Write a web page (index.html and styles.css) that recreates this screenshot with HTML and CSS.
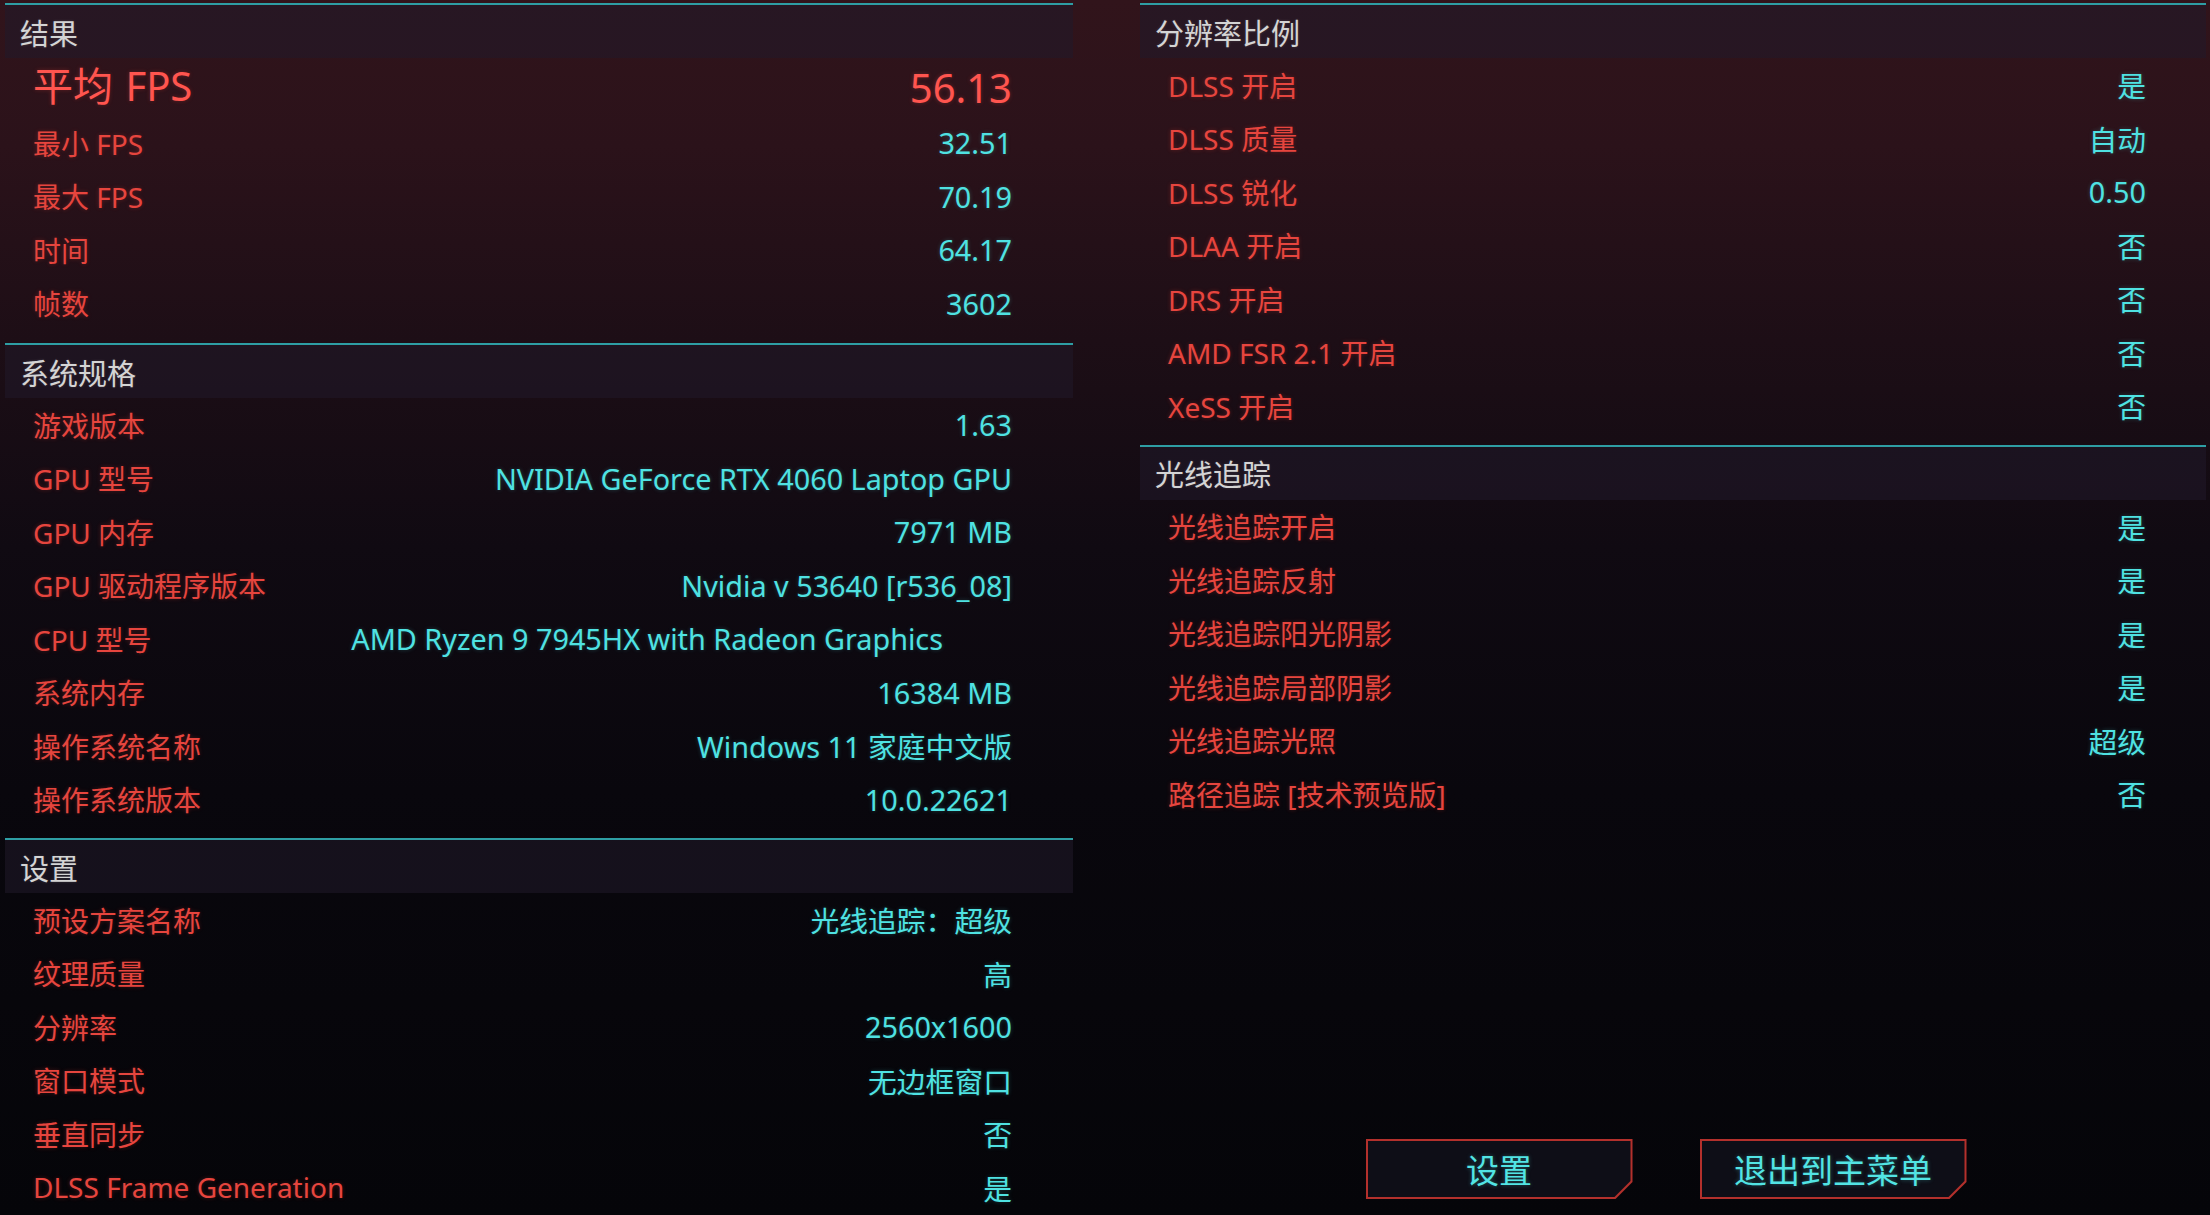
FILE: index.html
```html
<!DOCTYPE html>
<html lang="zh-CN">
<head>
  <meta charset="UTF-8">
  <title>基准测试结果</title>
  <link rel="stylesheet" href="styles.css">
</head>
<body>

  <div class="screen">

    <div class="column column-left">
      <section class="group group-first">
        <h2 class="group-title">结果</h2>
        <div class="row row-main"><span class="label">平均 FPS</span><span class="value">56.13</span></div>
        <div class="row"><span class="label">最小 FPS</span><span class="value">32.51</span></div>
        <div class="row"><span class="label">最大 FPS</span><span class="value">70.19</span></div>
        <div class="row"><span class="label">时间</span><span class="value">64.17</span></div>
        <div class="row"><span class="label">帧数</span><span class="value">3602</span></div>
      </section>

      <section class="group">
        <h2 class="group-title">系统规格</h2>
        <div class="row"><span class="label">游戏版本</span><span class="value">1.63</span></div>
        <div class="row"><span class="label">GPU 型号</span><span class="value">NVIDIA GeForce RTX 4060 Laptop GPU</span></div>
        <div class="row"><span class="label">GPU 内存</span><span class="value">7971 MB</span></div>
        <div class="row"><span class="label">GPU 驱动程序版本</span><span class="value">Nvidia v 53640 [r536_08]</span></div>
        <div class="row"><span class="label">CPU 型号</span><span class="value value-cpu">AMD Ryzen 9 7945HX with Radeon Graphics</span></div>
        <div class="row"><span class="label">系统内存</span><span class="value">16384 MB</span></div>
        <div class="row"><span class="label">操作系统名称</span><span class="value">Windows 11 家庭中文版</span></div>
        <div class="row"><span class="label">操作系统版本</span><span class="value">10.0.22621</span></div>
      </section>

      <section class="group group-last">
        <h2 class="group-title">设置</h2>
        <div class="row"><span class="label">预设方案名称</span><span class="value">光线追踪：超级</span></div>
        <div class="row"><span class="label">纹理质量</span><span class="value">高</span></div>
        <div class="row"><span class="label">分辨率</span><span class="value">2560x1600</span></div>
        <div class="row"><span class="label">窗口模式</span><span class="value">无边框窗口</span></div>
        <div class="row"><span class="label">垂直同步</span><span class="value">否</span></div>
        <div class="row"><span class="label">DLSS Frame Generation</span><span class="value">是</span></div>
      </section>
    </div>

    <div class="column column-right">
      <section class="group">
        <h2 class="group-title">分辨率比例</h2>
        <div class="row"><span class="label">DLSS 开启</span><span class="value">是</span></div>
        <div class="row"><span class="label">DLSS 质量</span><span class="value">自动</span></div>
        <div class="row"><span class="label">DLSS 锐化</span><span class="value">0.50</span></div>
        <div class="row"><span class="label">DLAA 开启</span><span class="value">否</span></div>
        <div class="row"><span class="label">DRS 开启</span><span class="value">否</span></div>
        <div class="row"><span class="label">AMD FSR 2.1 开启</span><span class="value">否</span></div>
        <div class="row"><span class="label">XeSS 开启</span><span class="value">否</span></div>
      </section>

      <section class="group">
        <h2 class="group-title">光线追踪</h2>
        <div class="row"><span class="label">光线追踪开启</span><span class="value">是</span></div>
        <div class="row"><span class="label">光线追踪反射</span><span class="value">是</span></div>
        <div class="row"><span class="label">光线追踪阳光阴影</span><span class="value">是</span></div>
        <div class="row"><span class="label">光线追踪局部阴影</span><span class="value">是</span></div>
        <div class="row"><span class="label">光线追踪光照</span><span class="value">超级</span></div>
        <div class="row"><span class="label">路径追踪 [技术预览版]</span><span class="value">否</span></div>
      </section>

      <div class="actions">
        <button type="button" class="cut-btn">设置</button>
        <button type="button" class="cut-btn">退出到主菜单</button>
      </div>
    </div>

  </div>

</body>
</html>
```

FILE: styles.css
```css
html, body {
  margin: 0;
  height: 100%;
}

body {
  background: linear-gradient(180deg, #31141b 0%, #2b121a 12%, #1d0e16 28%, #100a12 45%, #09070d 65%, #050509 100%);
  font-family: "Noto Sans", "Noto Sans CJK SC", sans-serif;
  overflow: hidden;
}

.screen {
  display: flex;
  gap: 67px;
  height: 1215px;
  padding: 3px 4px 0 5px;
  box-sizing: border-box;
}

.column {
  display: flex;
  flex-direction: column;
}

.column-left {
  width: 1068px;
}

.column-right {
  width: 1066px;
}

.group {
  border-top: 2px solid #2e9ea4;
  padding-bottom: 12px;
}

.group-first {
  padding-bottom: 13px;
}

.group-last {
  padding-bottom: 0;
}

.group-title {
  margin: 0;
  height: 53px;
  display: flex;
  align-items: center;
  padding-left: 15px;
  font-size: 29px;
  font-weight: 400;
  color: #d4d4d4;
  background-color: rgba(32, 26, 42, 0.55);
  text-shadow: 0 0 3px rgba(255, 255, 255, 0.15);
}

.row {
  height: 53.5px;
  display: flex;
  align-items: center;
  justify-content: space-between;
  padding: 0 61px 0 28px;
}

.column-right .row {
  padding-right: 60px;
}

.label {
  font-size: 28px;
  color: #e6453e;
  text-shadow: 0 0 4px rgba(230, 60, 50, 0.3);
}

.value {
  font-size: 28.8px;
  color: #4fe2e2;
  text-shadow: 0 0 4px rgba(80, 226, 226, 0.25);
}

.value-cpu {
  padding-right: 69px;
}

.row-main {
  height: 58px;
}

.row-main .label {
  font-size: 40px;
  word-spacing: 2px;
  color: #ff554f;
  margin-top: -7px;
}

.row-main .value {
  font-size: 40px;
  color: #ff554f;
  text-shadow: 0 0 4px rgba(255, 80, 70, 0.3);
}

.actions {
  margin-top: auto;
  display: flex;
  justify-content: center;
  gap: 67px;
  padding: 0 14px 16px 0;
}

.cut-btn {
  position: relative;
  width: 267px;
  height: 60px;
  border: none;
  padding: 0;
  background-color: #b3302c;
  clip-path: polygon(0 0, 100% 0, 100% calc(100% - 17px), calc(100% - 17px) 100%, 0 100%);
  font-family: "Noto Sans", "Noto Sans CJK SC", sans-serif;
  font-size: 33px;
  color: #52e4e4;
  text-shadow: 0 0 4px rgba(80, 226, 226, 0.35);
  cursor: pointer;
  isolation: isolate;
}

.cut-btn::before {
  content: "";
  position: absolute;
  inset: 2px;
  z-index: -1;
  background-color: #0e0e17;
  clip-path: polygon(0 0, 100% 0, 100% calc(100% - 16px), calc(100% - 16px) 100%, 0 100%);
}
```
